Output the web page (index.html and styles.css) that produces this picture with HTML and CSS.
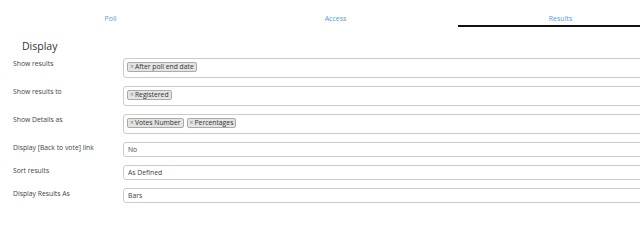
FILE: index.html
```html
<!DOCTYPE html>
<html>
<head>
<meta charset="utf-8">
<title>Poll settings</title>
<link rel="stylesheet" href="styles.css">
</head>
<body>
<div class="page">
  <div class="frame">
    <nav class="tabs">
      <a class="tab">Poll</a>
      <a class="tab">Access</a>
      <a class="tab active">Results</a>
    </nav>

    <div class="section">
      <h2>Display</h2>

      <div class="row">
        <label>Show results</label>
        <div class="multi">
          <span class="tag"><i>×</i>After poll end date</span>
        </div>
      </div>

      <div class="row">
        <label>Show results to</label>
        <div class="multi">
          <span class="tag"><i>×</i>Registered</span>
        </div>
      </div>

      <div class="row">
        <label>Show Details as</label>
        <div class="multi">
          <span class="tag"><i>×</i>Votes Number</span>
          <span class="tag"><i>×</i>Percentages</span>
        </div>
      </div>

      <div class="row">
        <label>Display [Back to vote] link</label>
        <div class="select">No</div>
      </div>

      <div class="row">
        <label>Sort results</label>
        <div class="select">As Defined</div>
      </div>

      <div class="row">
        <label>Display Results As</label>
        <div class="select">Bars</div>
      </div>
    </div>
  </div>
</div>
</body>
</html>
```

FILE: styles.css
```css
html {
  overflow: hidden;
}
body {
  margin: 0;
  background: #fff;
  font-family: "Open Sans", "DejaVu Sans", sans-serif;
  color: #333;
}
.page {
  width: 640px;
  overflow: hidden;
}
.frame {
  width: 680px;
}
.tabs {
  display: flex;
  gap: 20px;
  padding-left: 8px;
  height: 27px;
}
.tab {
  width: 205px;
  box-sizing: border-box;
  text-align: center;
  font-size: 7px;
  line-height: 7px;
  padding-top: 15px;
  color: #5a9ad6;
}
.tab.active {
  border-bottom: 2px solid #111;
}
.section {
  padding-top: 14px;
}
.section > h2 {
  margin: 0 0 6px 22px;
  font-size: 10.5px;
  font-weight: normal;
  line-height: 11px;
  color: #333;
}
.row {
  display: flex;
  margin-bottom: 8px;
}
.row > label {
  width: 123px;
  box-sizing: border-box;
  padding: 1px 0 0 13px;
  font-size: 6.8px;
  line-height: 9px;
  color: #444;
}
.multi {
  flex: 1;
  height: 20px;
  box-sizing: border-box;
  border: 1px solid #ccc;
  border-radius: 3px;
  padding: 3px 3px 0;
  display: flex;
  gap: 3px;
  align-items: flex-start;
}
.tag {
  height: 10px;
  box-sizing: border-box;
  border: 1px solid #aaa;
  border-radius: 2px;
  background: #e4e4e4;
  padding: 0 2px;
  font-size: 6.8px;
  line-height: 8px;
  color: #333;
}
.tag > i {
  font-style: normal;
  color: #888;
  margin-right: 1px;
}
.select {
  flex: 1;
  height: 15px;
  box-sizing: border-box;
  border: 1px solid #ccc;
  border-radius: 3px;
  padding: 0 4px;
  font-size: 6.8px;
  line-height: 13px;
  color: #444;
}
```
